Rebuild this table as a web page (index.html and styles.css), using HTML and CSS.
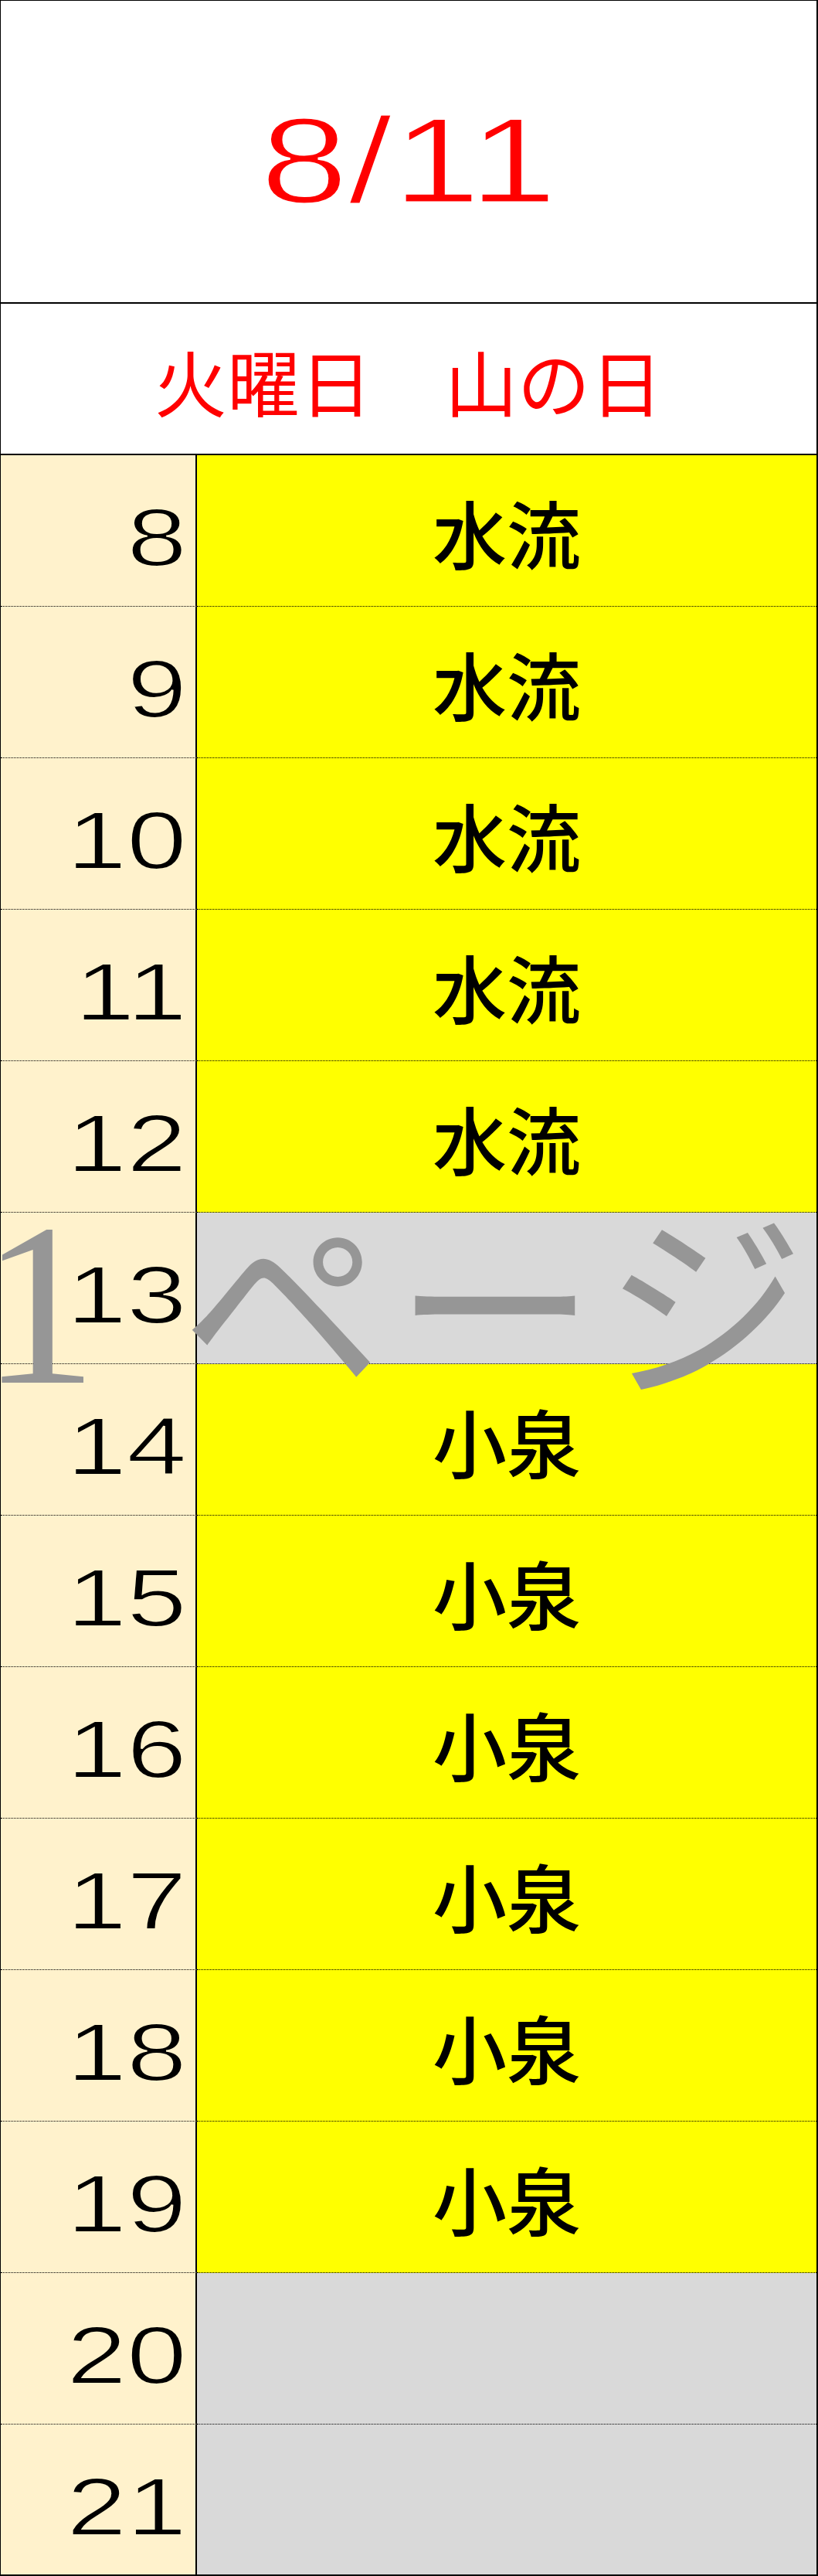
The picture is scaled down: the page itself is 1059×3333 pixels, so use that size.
FILE: index.html
```html
<!DOCTYPE html>
<html lang="ja">
<head>
<meta charset="utf-8">
<title>8/11</title>
<link rel="stylesheet" href="styles.css">
</head>
<body>
<div class="sheet">
  <div class="date"><span class="date-text">8/11</span></div>
  <div class="day">火曜日　山の日</div>
  <div class="rows">
    <div class="row"><div class="hour"><span class="num">8</span></div><div class="slot slot-busy">水流</div></div>
    <div class="row"><div class="hour"><span class="num">9</span></div><div class="slot slot-busy">水流</div></div>
    <div class="row"><div class="hour"><span class="num">10</span></div><div class="slot slot-busy">水流</div></div>
    <div class="row"><div class="hour"><span class="num">11</span></div><div class="slot slot-busy">水流</div></div>
    <div class="row"><div class="hour"><span class="num">12</span></div><div class="slot slot-busy">水流</div></div>
    <div class="row"><div class="hour"><span class="num">13</span></div><div class="slot slot-free"></div></div>
    <div class="row"><div class="hour"><span class="num">14</span></div><div class="slot slot-busy">小泉</div></div>
    <div class="row"><div class="hour"><span class="num">15</span></div><div class="slot slot-busy">小泉</div></div>
    <div class="row"><div class="hour"><span class="num">16</span></div><div class="slot slot-busy">小泉</div></div>
    <div class="row"><div class="hour"><span class="num">17</span></div><div class="slot slot-busy">小泉</div></div>
    <div class="row"><div class="hour"><span class="num">18</span></div><div class="slot slot-busy">小泉</div></div>
    <div class="row"><div class="hour"><span class="num">19</span></div><div class="slot slot-busy">小泉</div></div>
    <div class="row"><div class="hour"><span class="num">20</span></div><div class="slot slot-free"></div></div>
    <div class="row"><div class="hour"><span class="num">21</span></div><div class="slot slot-free"></div></div>
  </div>
  <div class="watermark"><span class="wm-num">1</span><span class="wm-word">ページ</span></div>
</div>
</body>
</html>
```
FILE: styles.css
```css
html, body {
  margin: 0;
  padding: 0;
  background: #ffffff;
  overflow: hidden;
}

.sheet {
  position: relative;
  width: 1059px;
  height: 3333px;
  box-sizing: border-box;
  border-top: 1px solid #000;
  border-left: 1px solid #000;
  border-right: 2px solid #000;
  border-bottom: 2px solid #000;
  display: flex;
  flex-direction: column;
  overflow: hidden;
}

.date {
  height: 392px;
  box-sizing: border-box;
  border-bottom: 2px solid #000;
  padding-top: 22px;
  display: flex;
  align-items: center;
  justify-content: center;
}

.date-text {
  display: inline-block;
  font-family: "Liberation Sans", Arial, sans-serif;
  font-size: 158px;
  line-height: 1;
  color: #ff0000;
  transform: scaleX(1.3);
  -webkit-text-stroke: 3px #ffffff;
}

.day {
  height: 196px;
  box-sizing: border-box;
  border-bottom: 2px solid #000;
  padding-top: 4px;
  display: flex;
  align-items: center;
  justify-content: center;
  font-family: "Noto Sans CJK JP", sans-serif;
  font-size: 94px;
  line-height: 1;
  color: #ff0000;
}

.rows {
  display: flex;
  flex-direction: column;
}

.row {
  display: grid;
  grid-template-columns: 254px 1fr;
  height: 196px;
}

.row:last-child {
  height: 194px;
}

.hour {
  box-sizing: border-box;
  background: #fff2cc;
  border-right: 2px solid #000;
  border-bottom: 1px dotted #000;
  text-align: right;
  padding: 17px 11px 0 0;
  font-family: "Liberation Sans", Arial, sans-serif;
  font-size: 106px;
  line-height: 178px;
  color: #000;
  overflow: hidden;
}

.num {
  display: inline-block;
  transform: scaleX(1.32);
  transform-origin: right center;
  -webkit-text-stroke: 2px #fff2cc;
}

.slot {
  box-sizing: border-box;
  border-bottom: 1px dotted #000;
  padding-top: 3px;
  display: flex;
  align-items: center;
  justify-content: center;
  font-family: "Noto Sans CJK JP", sans-serif;
  font-size: 96px;
  font-weight: 500;
  line-height: 1;
  color: #000;
}

.row:last-child .hour,
.row:last-child .slot {
  border-bottom: none;
}

.slot-busy {
  background: #ffff00;
}

.slot-free {
  background: #d9d9d9;
}

.watermark {
  position: absolute;
  left: 0;
  top: 1525px;
  display: flex;
  align-items: baseline;
  line-height: 300px;
  color: #969696;
  pointer-events: none;
  white-space: nowrap;
}

.wm-num {
  font-family: "Liberation Serif", "Times New Roman", serif;
  font-size: 300px;
  margin-left: -25px;
}

.wm-word {
  font-family: "Noto Sans CJK JP", sans-serif;
  font-size: 260px;
  letter-spacing: 16px;
  margin-left: 109px;
}
```
